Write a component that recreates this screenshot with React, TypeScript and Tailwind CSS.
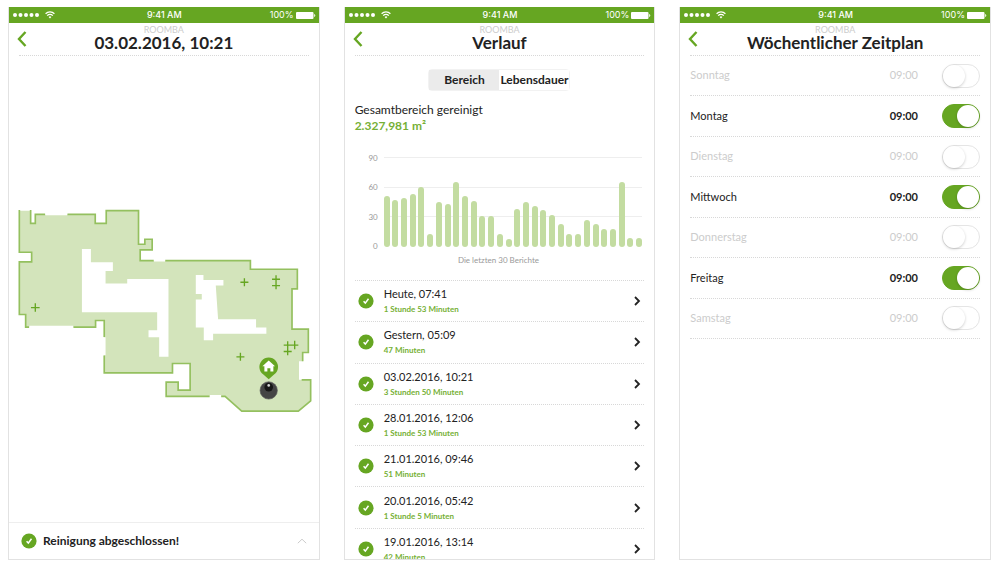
import { useState } from 'react';
import type { ReactNode } from 'react';

const reports = [
  { title: 'Heute, 07:41', duration: '1 Stunde 53 Minuten' },
  { title: 'Gestern, 05:09', duration: '47 Minuten' },
  { title: '03.02.2016, 10:21', duration: '3 Stunden 50 Minuten' },
  { title: '28.01.2016, 12:06', duration: '1 Stunde 53 Minuten' },
  { title: '21.01.2016, 09:46', duration: '51 Minuten' },
  { title: '20.01.2016, 05:42', duration: '1 Stunde 5 Minuten' },
  { title: '19.01.2016, 13:14', duration: '42 Minuten' },
];

const areas = [
  51, 47, 49, 53, 60, 13, 45, 43, 65, 51, 46, 31, 31, 13, 8, 38, 45, 41, 37, 32, 23, 13, 13, 27, 23, 18, 18, 65, 9, 9,
];

const weekdays = [
  { name: 'Sonntag', active: false },
  { name: 'Montag', active: true },
  { name: 'Dienstag', active: false },
  { name: 'Mittwoch', active: true },
  { name: 'Donnerstag', active: false },
  { name: 'Freitag', active: true },
  { name: 'Samstag', active: false },
];

export default function App() {
  return (
    <main className="grid h-screen grid-cols-3 gap-6 bg-white pt-[7px] pr-[9px] pb-2 pl-2 font-['Lato',sans-serif] text-[#222222]">
      <MapScreen />
      <HistoryScreen />
      <ScheduleScreen />
    </main>
  );
}

function Screen({ title, children }: { title: string; children: ReactNode }) {
  return (
    <section className="flex min-h-0 flex-col overflow-hidden border border-t-0 border-[#e2e2e2]">
      <StatusBar />
      <header className="mx-2.5 grid h-[33px] shrink-0 grid-cols-[20px_1fr_20px] items-center border-b border-dotted border-[#d8d8d8]">
        <button type="button" aria-label="Zurück" className="flex h-full items-center">
          <svg viewBox="0 0 10 16" className="-ml-0.5 h-4 w-[10px]" fill="none" stroke="#66a622" strokeWidth="2.4">
            <path d="M8.5 1 2 8l6.5 7" />
          </svg>
        </button>
        <div className="pb-[3px] text-center">
          <p className="text-[9px] leading-[9px] text-[#cccccc]">ROOMBA</p>
          <h1 className="text-[17px] leading-[17px] font-bold whitespace-nowrap">{title}</h1>
        </div>
      </header>
      {children}
    </section>
  );
}

function StatusBar() {
  return (
    <div className="-mx-px grid h-4 shrink-0 grid-cols-3 items-center bg-[#66a622] pr-1 pl-[5px] font-['Inter',sans-serif] text-[9px] leading-4 text-white">
      <div className="flex items-center gap-1.5">
        <svg viewBox="0 0 26 4" className="h-1 w-[26px]" fill="currentColor">
          {[2, 7.5, 13, 18.5, 24].map((x) => (
            <circle key={x} cx={x} cy="2" r="2" />
          ))}
        </svg>
        <svg viewBox="0 0 10 8" className="h-2 w-[10px]" fill="none" stroke="currentColor" strokeWidth="1.3">
          <path d="M.6 2.8a6.2 6.2 0 0 1 8.8 0M2.2 4.6a4 4 0 0 1 5.6 0" />
          <path d="M3.6 6 5 7.6 6.4 6A2 2 0 0 0 3.6 6z" fill="currentColor" stroke="none" />
        </svg>
      </div>
      <span className="text-center font-medium">9:41 AM</span>
      <div className="flex items-center justify-end gap-0.5">
        <span>100%</span>
        <svg viewBox="0 0 20 7" className="h-[7px] w-5" fill="currentColor">
          <rect width="17.5" height="7" rx="1" />
          <path d="M18.2 2a1.6 1.6 0 0 1 0 3z" />
        </svg>
      </div>
    </div>
  );
}

function CheckBadge() {
  return (
    <svg viewBox="0 0 16 16" className="size-4 shrink-0">
      <circle cx="8" cy="8" r="7.6" fill="#66a622" />
      <path d="m5.6 8.3 1.7 1.8 3.2-4.3" fill="none" stroke="white" strokeWidth="1.5" />
    </svg>
  );
}

function MapScreen() {
  return (
    <Screen title="03.02.2016, 10:21">
      <div className="flex-1 pt-36">
        <FloorPlan />
      </div>
      <footer className="flex h-[37px] items-center border-t border-[#eeeeee] px-3">
        <CheckBadge />
        <p className="ml-1.5 flex-1 text-xs font-bold">Reinigung abgeschlossen!</p>
        <button type="button" aria-label="Details anzeigen">
          <svg viewBox="0 0 10 6" className="h-1.5 w-[10px]" fill="none" stroke="#cccccc">
            <path d="m.8 5.2 4.2-4 4.2 4" />
          </svg>
        </button>
      </footer>
    </Screen>
  );
}

function FloorPlan() {
  return (
    <svg viewBox="-3 0 930 660" className="w-full" role="img" aria-label="Gereinigter Bereich">
      {/* cleaned floor */}
      <path
        fill="#d3e4bb"
        d="M28 32H62V70H76V43H256V70H289V32H386V133H405V118H427V150H391V182H722V208H863V267H847V388H896V458H879V484H868V540H903V603L866 634H696L646 590H469V547H505V571H541V491H488V519H283V362H257V382H47V344H28V186H65V157H28Z"
      />
      {/* walls */}
      <path
        fill="none"
        stroke="#94c05f"
        strokeWidth="5"
        d="M62 30V70H76V43H106M172 43H256V70H289V32H386V133H405V118H427V150H391V182H432M466 182H722V208H863V267H847V388H896V458H879V484M876 540H903V603L866 634H696L646 590H634M600 590H469V547H505V571H541V491H488V519H283V466M283 412V362H257V382H190M58 382H47V344H28V186H65V157H28V30"
      />
      {/* obstacles */}
      <path
        fill="white"
        d="M216 147H243V187H309V213H287V251H352V237H476V471H448V412H416V391H442V337H216ZM558 225H581V240H641V257H618L625 358H739V383H770V402H610V421H582V383H558V299H576V282H558ZM106 37H172V46H106ZM432 178H466V185H432ZM600 586H634V594H600ZM58 378H190V388H58ZM278 412H287V466H278Z"
      />
      {/* dirt spots */}
      <path
        fill="none"
        stroke="#66a622"
        strokeWidth="4"
        d="M63 323h26M76 310v26M692 247h24M704 235v24M787 238h24M787 257h24M799 226v42M680 471h24M692 459v24M822 436h44M822 455h24M834 424v42M855 423v25"
      />
      <path fill="#66a622" d="M777 538 761 524A28 28 0 1 1 793 524Z" />
      <path fill="white" d="m777 482 19 17h-5v16h-9v-10h-9v10h-9v-16h-6z" />
      <circle cx="777" cy="572" r="26" fill="#454545" stroke="#5c5c5c" strokeWidth="2" />
      <circle cx="777" cy="562" r="13" fill="#171717" />
      <circle cx="777" cy="557" r="4" fill="#d8d8d8" />
    </svg>
  );
}

function HistoryScreen() {
  const [tab, setTab] = useState('Bereich');

  return (
    <Screen title="Verlauf">
      <div className="mx-auto mt-[13px] flex h-[22px] w-[142px] shrink-0 rounded-sm border border-[#f2f2f2] text-xs leading-5 font-bold">
        {['Bereich', 'Lebensdauer'].map((name) => (
          <button
            key={name}
            type="button"
            onClick={() => setTab(name)}
            className={`w-1/2 ${tab === name ? 'bg-[#ebebeb]' : 'bg-white'}`}
          >
            {name}
          </button>
        ))}
      </div>
      <div className="mx-2.5 mt-[11px] shrink-0">
        <p className="text-xs leading-4">Gesamtbereich gereinigt</p>
        <p className="text-xs leading-4 font-bold text-[#76b035]">2.327,981 m²</p>
      </div>
      <AreaChart />
      <ul className="mx-2.5 mt-[15px] grid h-[289px] shrink-0 grid-rows-7">
        {reports.map((report) => (
          <li key={report.title} className="border-t border-dotted border-[#d8d8d8]">
            <button type="button" className="flex h-full w-full items-center pl-[3px] text-left">
              <CheckBadge />
              <span className="ml-2.5 flex-1">
                <span className="block text-[11px] leading-4">{report.title}</span>
                <span className="block text-[8px] leading-[14px] font-bold text-[#76b035]">{report.duration}</span>
              </span>
              <svg viewBox="0 0 8 10" className="mr-[3px] h-[10px] w-2" fill="none" stroke="#222222" strokeWidth="1.8">
                <path d="m2 1 4 4-4 4" />
              </svg>
            </button>
          </li>
        ))}
      </ul>
    </Screen>
  );
}

function AreaChart() {
  return (
    <figure className="mr-3 ml-2.5 mt-[19px] shrink-0 text-[#999999]">
      <div className="flex gap-1.5">
        <div className="flex h-[98px] w-[23px] flex-col justify-between text-right text-[8px] leading-[10px]">
          <span>90</span>
          <span>60</span>
          <span>30</span>
          <span>0</span>
        </div>
        <div className="my-1 grid h-[90px] flex-1">
          <div className="col-start-1 row-start-1 flex flex-col justify-between">
            <div className="h-px bg-[#eeeeee]" />
            <div className="h-px bg-[#eeeeee]" />
            <div className="h-px bg-[#eeeeee]" />
            <div className="h-px" />
          </div>
          <div className="col-start-1 row-start-1 flex items-end justify-between">
            {areas.map((area, i) => (
              <div key={i} className="w-1.5 rounded-full bg-[#c3dca1]" style={{ height: `${(area / 90) * 100}%` }} />
            ))}
          </div>
        </div>
      </div>
      <figcaption className="mt-1 text-center text-[8px] leading-[10px]">Die letzten 30 Berichte</figcaption>
    </figure>
  );
}

function ScheduleScreen() {
  const [days, setDays] = useState(weekdays);

  const toggle = (name: string) => {
    setDays(days.map((day) => (day.name === name ? { ...day, active: !day.active } : day)));
  };

  return (
    <Screen title="Wöchentlicher Zeitplan">
      <div className="mx-2.5 grid h-[283px] shrink-0 grid-rows-7">
        {days.map((day) => (
          <label
            key={day.name}
            className={`flex items-center border-b border-dotted border-[#d8d8d8] text-[11px] ${
              day.active ? 'text-[#222222]' : 'text-[#cccccc]'
            }`}
          >
            <span className="flex-1">{day.name}</span>
            <span className={day.active ? 'font-bold' : ''}>09:00</span>
            <input
              type="checkbox"
              checked={day.active}
              onChange={() => toggle(day.name)}
              className="ml-6 flex h-6 w-[38px] appearance-none items-center rounded-full border border-[#e5e5e5] bg-white before:size-[22px] before:rounded-full before:bg-white before:shadow-[0_1px_3px_rgba(0,0,0,0.2)] checked:justify-end checked:border-[#66a622] checked:bg-[#66a622]"
            />
          </label>
        ))}
      </div>
    </Screen>
  );
}
